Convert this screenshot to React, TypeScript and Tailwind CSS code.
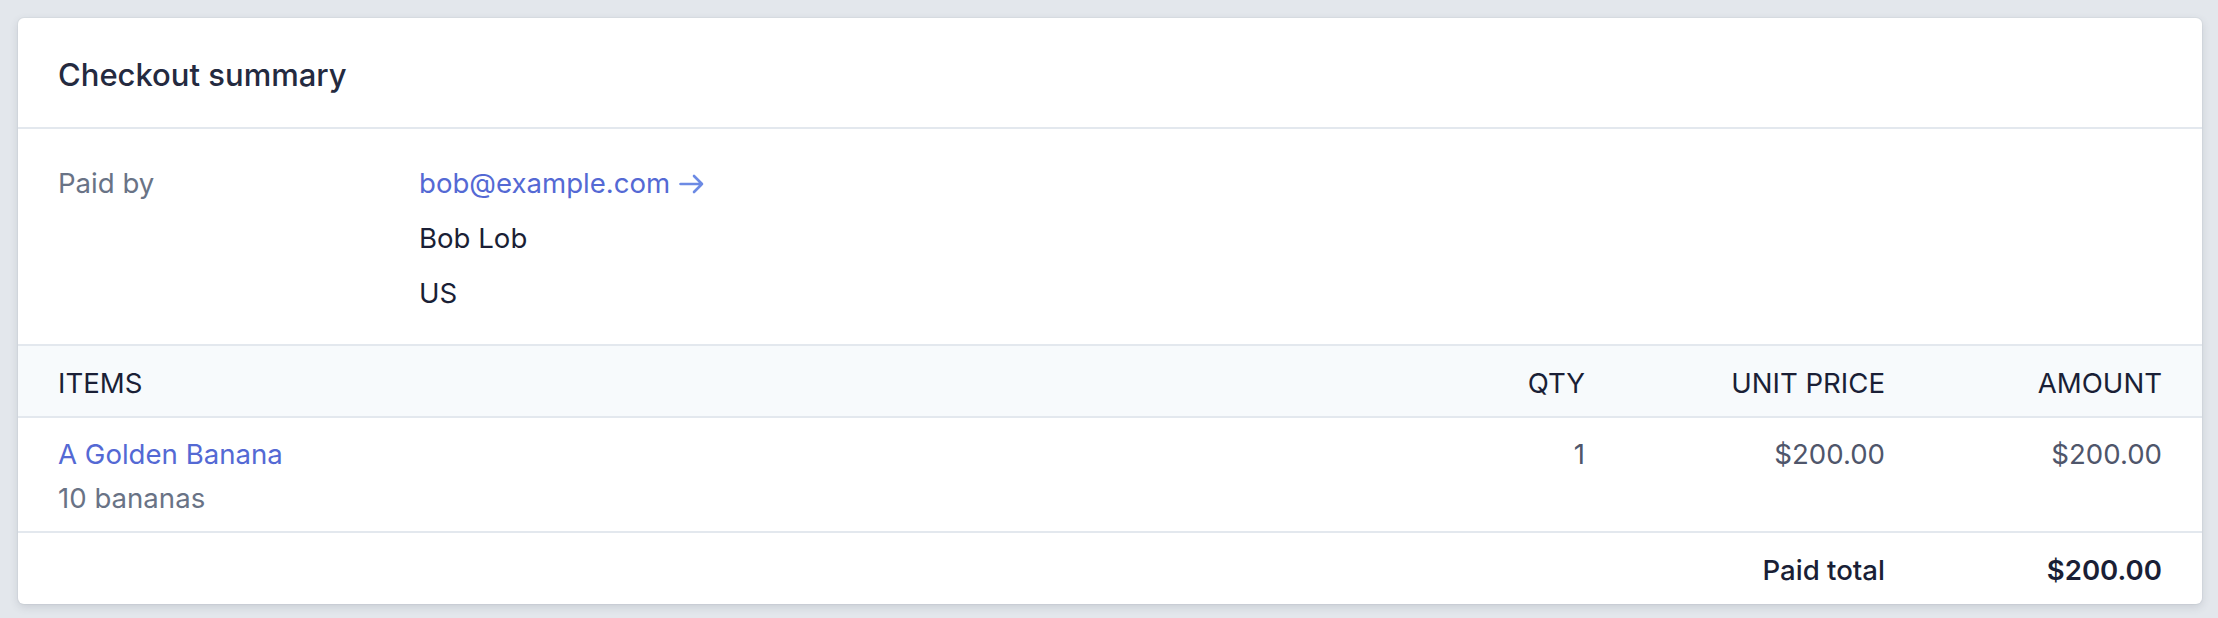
import React from "react";

const font = { fontFamily: "Inter, 'Noto Sans', sans-serif" };

function ArrowRight() {
  return (
    <svg width="25" height="20" viewBox="0 0 25 20" fill="none" className="ml-[9px] text-[#6c8ae4]">
      <path d="M1.5 10H23M15 2L23 10L15 18" stroke="currentColor" strokeWidth="2.6" strokeLinecap="round" strokeLinejoin="round" />
    </svg>
  );
}

const cols = "grid grid-cols-[1fr_200px_300px_277px]";

export default function App() {
  return (
    <div className="min-h-screen bg-[#e3e7ec] pt-[18px] pl-[18px] pr-[16px] pb-[13px]" style={font}>
      <div className="overflow-hidden rounded-md bg-white text-[27.6px] text-[#1a1f36] shadow-[0_0_0_1px_rgba(60,66,87,0.04),0_3px_8px_rgba(60,66,87,0.16)]">
        {/* header */}
        <div className="border-b-2 border-[#e3e8ee] px-10 pt-[37px] pb-[32px]">
          <h1 className="text-[31px] leading-[40px] font-medium text-[#242a40]">Checkout summary</h1>
        </div>

        {/* paid by */}
        <div className="grid grid-cols-[361px_1fr] border-b-2 border-[#e3e8ee] px-10 pt-[27px] pb-[23px] leading-[55px]">
          <div className="text-[#697386]">Paid by</div>
          <div>
            <a href="#" className="flex items-center text-[#5469d4]">
              bob@example.com
              <ArrowRight />
            </a>
            <div>Bob Lob</div>
            <div>US</div>
          </div>
        </div>

        {/* table head */}
        <div className={`${cols} border-b-2 border-[#e3e8ee] bg-[#f7fafc] px-10 pt-[17px] pb-[13px] leading-[40px] uppercase`}>
          <div>Items</div>
          <div className="text-right">Qty</div>
          <div className="text-right">Unit price</div>
          <div className="text-right">Amount</div>
        </div>

        {/* item row */}
        <div className={`${cols} border-b-2 border-[#e3e8ee] px-10 pt-[14px] pb-[11px] leading-[44px]`}>
          <div>
            <a href="#" className="block text-[#5469d4]">A Golden Banana</a>
            <div className="text-[#697386]">10 bananas</div>
          </div>
          <div className="text-right text-[#4f566b]">1</div>
          <div className="text-right text-[#4f566b]">$200.00</div>
          <div className="text-right text-[#4f566b]">$200.00</div>
        </div>

        {/* footer */}
        <div className={`${cols} px-10 pt-[17px] pb-[14px] leading-[40px]`}>
          <div />
          <div />
          <div className="text-right font-medium">Paid total</div>
          <div className="text-right font-semibold">$200.00</div>
        </div>
      </div>
    </div>
  );
}
